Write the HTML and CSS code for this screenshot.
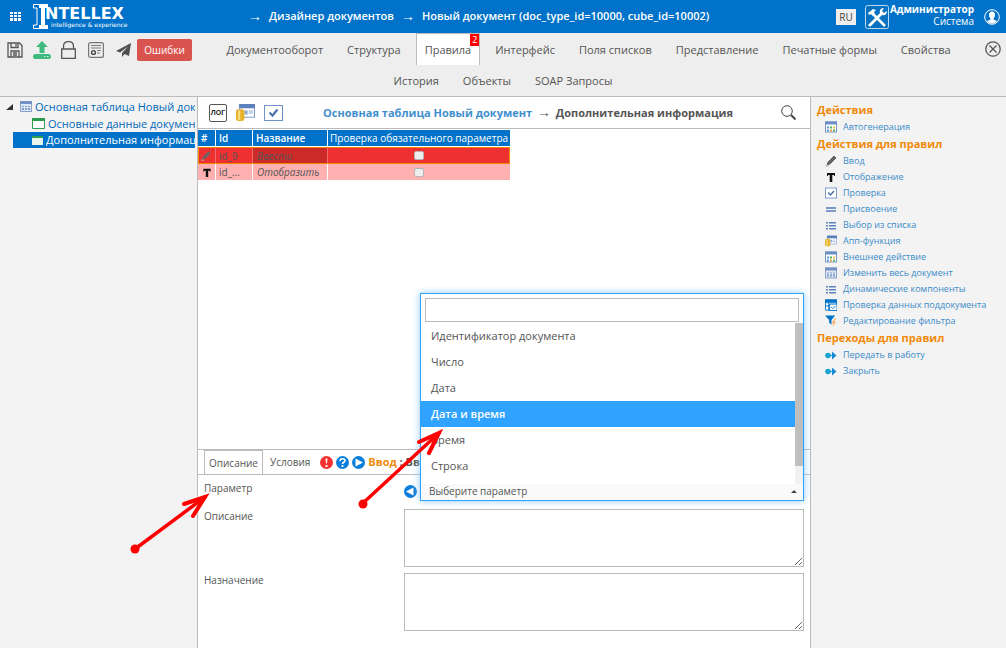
FILE: index.html
```html
<!DOCTYPE html>
<html lang="ru">
<head>
<meta charset="utf-8">
<title>Intellex — Дизайнер документов</title>
<link rel="stylesheet" href="styles.css">
</head>
<body>
<svg class="sprite" aria-hidden="true">
  <symbol id="i-calendar" viewBox="0 0 12 11"><rect x=".5" y=".5" width="11" height="10" fill="#fff" stroke="#7b97c9"/><path d="M0 0h12v3H0z" fill="#6d8fc7"/><path d="M2 5h2v2H2zM2 8h2v2H2z" fill="#5b9be0"/><path d="M5 5h2v2H5z" fill="#4fb35c"/><path d="M5 8h2v2H5z" fill="#e8a13c"/><path d="M8 5h2v2H8z" fill="#f0b84a"/><path d="M8 8h2v2H8z" fill="#4fb35c"/></symbol>
  <symbol id="i-grid" viewBox="0 0 12 11"><rect x=".5" y=".5" width="11" height="10" fill="#dfe7f4" stroke="#8aa1c9"/><path d="M0 0h12v3H0z" fill="#7391c4"/><path d="M2 5h2v1H2zM5 5h2v1H5zM8 5h2v1H8zM2 7h2v2H2zM5 7h2v2H5zM8 7h2v2H8z" fill="#7d9bce"/></symbol>
  <symbol id="i-pencil" viewBox="0 0 12 12"><path d="M9 1l2 2-6 6-3 1 1-3z" fill="#666" stroke="#666"/><path d="M0 11h4" stroke="#bbb"/></symbol>
  <symbol id="i-t" viewBox="0 0 12 12"><path d="M2 2h8v3H9V4H7.300v7H4.700V4H3v1H2z" fill="#111"/></symbol>
  <symbol id="i-check" viewBox="0 0 12 11"><rect x=".5" y=".5" width="11" height="10" fill="#fff" stroke="#7f9ccb"/><path d="M3 5l2.500 2.500L9 3.500" fill="none" stroke="#4f73ad" stroke-width="1.500"/></symbol>
  <symbol id="i-equal" viewBox="0 0 12 12"><path d="M1 4h10v2H1zM1 7h10v2H1z" fill="#7b98ca"/></symbol>
  <symbol id="i-list" viewBox="0 0 12 12"><path d="M1 3h2v1.500H1zM1 6h2v1.500H1zM1 9h2v1.500H1zM4 3h7v1.500H4zM4 6h7v1.500H4zM4 9h7v1.500H4z" fill="#5f83c0"/></symbol>
  <symbol id="i-app" viewBox="0 0 18 16"><path d="M3.500.5h14v12h-14z" fill="#fff" stroke="#7f9ccb"/><path d="M3 0h15v4H3z" fill="#5b80bd"/><path d="M8 6h3v4H8zM12 6h4v1h-4zM12 8h4v1h-4z" fill="#8ba8d8"/><rect x="0" y="5" width="8" height="11" rx="2" fill="#e8b22e"/><path d="M2 6h2v9H2z" fill="#f8df83"/></symbol>
  <symbol id="i-doccheck" viewBox="0 0 13 12"><path d="M.5.5h12v11H.5zM0 3.500h13M4 3v9M0 7h8" fill="#fff" stroke="#0072c9"/><path d="M0 0h13v3H0z" fill="#0072c9"/><path d="M5 5h8v7H5z" fill="#fff" stroke="#0072c9"/><path d="M6.500 8l2 2 3-3" fill="none" stroke="#0072c9"/></symbol>
  <symbol id="i-filter" viewBox="0 0 13 12"><path d="M0 0h11L7 5v5L4.500 8V5z" fill="#0072c9"/><path d="M11 3L7 8h2l-1 4 4-5h-2l2-4z" fill="#ffad69"/></symbol>
  <symbol id="i-move" viewBox="0 0 12 12"><circle cx="3" cy="6.500" r="2.800" fill="#19a4d4"/><path d="M6 6h1V2.500l4.500 4-4.500 4V7H6z" fill="#1788cf"/></symbol>
</svg>

<header class="top">
  <button class="apps" aria-label="Меню"><svg width="11" height="9" viewBox="0 0 11 9"><path d="M0 0h3v2H0zM4 0h3v2H4zM8 0h3v2H8zM0 3h3v2H0zM4 3h3v2H4zM8 3h3v2H8zM0 6h3v3H0zM4 6h3v3H4zM8 6h3v3H8z" fill="#fff"/></svg></button>
  <div class="logo">
    <svg width="16" height="25" viewBox="0 0 16 25"><path d="M7 .5H.5v3.500H4v17H.5v3.500H7" fill="none" stroke="#fff"/><path d="M6 0h9v4h-3v17h3v4H6v-4h2V4H6z" fill="#fff"/></svg>
    <div class="logo-words"><strong>NTELLEX</strong><small>intelligence &amp; experience</small></div>
  </div>
  <nav class="crumbs" aria-label="Путь"><span class="arrow">→</span><a href="#">Дизайнер документов</a><span class="arrow">→</span><a href="#">Новый документ (doc_type_id=10000, cube_id=10002)</a></nav>
  <div class="account">
    <button class="lang">RU</button>
    <button class="service" aria-label="Сервис"><svg width="24" height="24" viewBox="0 0 24 24"><rect x=".5" y=".5" width="23" height="23" rx="2" fill="#0871c0" stroke="#b9daf2"/><path d="M7 8l13 13" stroke="#fff" stroke-width="2.500"/><path d="M17 8L4 21" stroke="#fff" stroke-width="2.800"/><path d="M3 8l5-4 3 1-2 2 1 2-2 2-2-2-2 1z" fill="#fff"/><path d="M15 8c-1-4 2-5 4-5l-2 3 2 2 3-2c0 3-2 5-5 4z" fill="#fff"/></svg></button>
    <div class="who"><b>Администратор</b><span>Система</span></div>
    <svg class="avatar" width="16" height="16" viewBox="0 0 16 16"><circle cx="8" cy="8" r="7.300" fill="none" stroke="#fff"/><path d="M8 2.500c2 0 3 1.500 3 3.500S10 9 9.500 9.500v1l3.500 1.500C11.500 14 10 14.500 8 14.500S4 14 3 12l3.500-1.500v-1C6 9 5 8 5 6s1-3.500 3-3.500z" fill="#fff"/></svg>
  </div>
</header>

<div class="toolbar">
  <div class="toolbar-row">
    <div class="tools">
      <button aria-label="Сохранить"><svg width="16" height="16" viewBox="0 0 16 16" fill="none" stroke="#555" stroke-width="1.300"><path d="M1 1h11.500L15 3.500V15H1zM4 1v4.500h7V1M4 15V9h8v6M9 2v2.500M6 11h4M6 13h4"/></svg></button>
      <button aria-label="Выгрузить"><svg width="18" height="18" viewBox="0 0 18 18" fill="#3fba7e"><path d="M9 0l6 6h-3.500v6h-5V6H3z"/><path d="M2 13h14q2 0 2 2.500T16 18H2q-2 0-2-2.500T2 13z"/><path d="M11 15h1.500v1H11zM14 15h1.500v1H14z" fill="#d6f5e5"/></svg></button>
      <button aria-label="Заблокировать"><svg width="15" height="18" viewBox="0 0 15 18" fill="none" stroke="#555" stroke-width="1.300"><path d="M.7 8h13.600v9.300H.7zM2.500 8V5.500C2.500 2.500 4.500.7 7.500.7s5 1.800 5 4.800V8"/></svg></button>
      <button aria-label="Свидетельство"><svg width="16" height="16" viewBox="0 0 16 16" fill="none" stroke="#777"><rect x=".6" y=".6" width="14.800" height="14.800" rx="2" stroke-width="1.200"/><path d="M3 3.500h10M3 6h10M9 8.500h4M9 11h3"/><circle cx="5.500" cy="10.500" r="1.900" stroke="#444" stroke-width="1.400"/></svg></button>
      <button aria-label="Отправить"><svg width="15" height="14" viewBox="0 0 15 14"><path d="M15 0L0 8l4 1.500L12 3.500 6 10v4l2.500-3L13 13z" fill="#505050"/></svg></button>
      <button class="errors">Ошибки</button>
    </div>
    <nav class="tabs" aria-label="Разделы">
      <a href="#">Документооборот</a><a href="#">Структура</a><a href="#" class="active" aria-current="page">Правила<span class="badge">2</span></a><a href="#">Интерфейс</a><a href="#">Поля списков</a><a href="#">Представление</a><a href="#">Печатные формы</a><a href="#">Свойства</a>
    </nav>
    <button class="close" aria-label="Закрыть"><svg width="16" height="16" viewBox="0 0 16 16" fill="none" stroke="#555" stroke-width="1.300"><circle cx="8" cy="8" r="7.200"/><path d="M4.500 4.500l7 7M11.500 4.500l-7 7"/></svg></button>
  </div>
  <nav class="tabs second" aria-label="Дополнительно"><a href="#">История</a><a href="#">Объекты</a><a href="#">SOAP Запросы</a></nav>
</div>

<div class="body">
  <aside class="tree">
    <ul>
      <li class="root"><svg width="7" height="6" viewBox="0 0 7 6"><path d="M7 0v6H0z" fill="#333"/></svg><svg width="12" height="11"><use href="#i-grid"/></svg><a href="#">Основная таблица Новый док</a></li>
      <li><svg width="13" height="11" viewBox="0 0 13 11"><path d="M.5.5h12v10H.5z" fill="#fff" stroke="#2c9d50"/><path d="M0 0h13v3H0z" fill="#2c9d50"/></svg><a href="#">Основные данные докумен</a></li>
      <li class="selected"><svg width="11" height="9" viewBox="0 0 11 9"><path d="M0 0h11v9H0z" fill="#e8f5ec"/><path d="M0 0h11v2H0z" fill="#2c9d50"/></svg><a href="#">Дополнительная информац</a></li>
    </ul>
  </aside>

  <main class="center">
    <div class="titlebar">
      <div class="title-tools">
        <button class="log">ЛОГ</button>
        <button aria-label="Апп-функция"><svg width="19" height="17"><use href="#i-app"/></svg></button>
        <button aria-label="Проверка"><svg width="19" height="16" viewBox="0 0 19 16"><rect x=".5" y=".5" width="18" height="15" fill="#fff" stroke="#6f92ca"/><path d="M5.500 7.500l3 3 5-6" fill="none" stroke="#4b73b5" stroke-width="2.200"/></svg></button>
      </div>
      <h1><a href="#">Основная таблица Новый документ</a> <span class="arrow">→</span> Дополнительная информация</h1>
      <button class="search" aria-label="Поиск"><svg width="15" height="15" viewBox="0 0 15 15" fill="none" stroke="#444"><circle cx="6" cy="6" r="5.300"/><path d="M10 10l4.500 4.500" stroke-width="2"/></svg></button>
    </div>
    <div class="rules">
      <table>
        <thead><tr><th class="c-icon">#</th><th class="c-id">Id</th><th class="c-name">Название</th><th class="c-check">Проверка обязательного параметра</th></tr></thead>
        <tbody>
          <tr class="current"><td><svg width="10" height="10"><use href="#i-pencil"/></svg></td><td>id_9</td><td class="name">Ввести</td><td class="mid"><input type="checkbox" aria-label="Проверка для Ввести"></td></tr>
          <tr><td><svg width="12" height="11"><use href="#i-t"/></svg></td><td>id_...</td><td class="name">Отобразить</td><td class="mid"><input type="checkbox" aria-label="Проверка для Отобразить"></td></tr>
        </tbody>
      </table>
    </div>
    <section class="details">
      <div class="detail-tabs">
        <button class="on">Описание</button><button>Условия</button>
        <div class="marks">
          <svg width="13" height="13" viewBox="0 0 13 13"><circle cx="6.500" cy="6.500" r="6.500" fill="#f5302f"/><path d="M5.500 2.500h2l-.5 5H6zM5.500 9h2v2h-2z" fill="#fff"/></svg>
          <svg width="13" height="13" viewBox="0 0 13 13"><circle cx="6.500" cy="6.500" r="6.500" fill="#0b7ddb"/><path d="M4 5c0-3 5-3 5-.5C9 6.500 6.500 6 6.500 8M6.500 9v2" fill="none" stroke="#fff" stroke-width="1.600"/></svg>
          <svg width="13" height="13" viewBox="0 0 13 13"><circle cx="6.500" cy="6.500" r="6.500" fill="#0b7ddb"/><path d="M3.500 2.500l7.500 4-7.500 4z" fill="#fff"/></svg>
        </div>
        <strong class="rule-name"><span>Ввод</span> : Вв</strong>
      </div>
      <form class="fields">
        <label for="param">Параметр</label>
        <div class="param">
          <button type="button" class="back" aria-label="Назад"><svg width="13" height="13" viewBox="0 0 13 13"><circle cx="6.500" cy="6.500" r="6.500" fill="#0b7ddb"/><path d="M9.500 2.500L2 6.500l7.500 4z" fill="#fff"/></svg></button>
          <div class="combo">
            <div class="combo-box">
              <input type="text" class="combo-search" aria-label="Поиск параметра">
              <ul class="options" role="listbox" aria-label="Параметр" tabindex="0">
                <li role="option">Идентификатор документа</li><li role="option">Число</li><li role="option">Дата</li><li role="option" class="hover" aria-selected="true">Дата и время</li><li role="option">Время</li><li role="option">Строка</li>
              </ul>
              <button type="button" id="param" class="combo-value" aria-expanded="true">Выберите параметр<svg width="6" height="3" viewBox="0 0 6 3"><path d="M3 0l3 3H0z" fill="#444"/></svg></button>
            </div>
          </div>
        </div>
        <label for="descr">Описание</label>
        <textarea id="descr"></textarea>
        <label for="purpose">Назначение</label>
        <textarea id="purpose"></textarea>
      </form>
    </section>
  </main>

  <aside class="actions">
    <h2>Действия</h2>
    <ul><li><svg><use href="#i-calendar"/></svg><a href="#">Автогенерация</a></li></ul>
    <h2>Действия для правил</h2>
    <ul>
      <li><svg><use href="#i-pencil"/></svg><a href="#">Ввод</a></li>
      <li><svg><use href="#i-t"/></svg><a href="#">Отображение</a></li>
      <li><svg><use href="#i-check"/></svg><a href="#">Проверка</a></li>
      <li><svg><use href="#i-equal"/></svg><a href="#">Присвоение</a></li>
      <li><svg><use href="#i-list"/></svg><a href="#">Выбор из списка</a></li>
      <li><svg><use href="#i-app"/></svg><a href="#">Апп-функция</a></li>
      <li><svg><use href="#i-calendar"/></svg><a href="#">Внешнее действие</a></li>
      <li><svg><use href="#i-grid"/></svg><a href="#">Изменить весь документ</a></li>
      <li><svg><use href="#i-list"/></svg><a href="#">Динамические компоненты</a></li>
      <li><svg><use href="#i-doccheck"/></svg><a href="#">Проверка данных поддокумента</a></li>
      <li><svg><use href="#i-filter"/></svg><a href="#">Редактирование фильтра</a></li>
    </ul>
    <h2>Переходы для правил</h2>
    <ul>
      <li><svg><use href="#i-move"/></svg><a href="#">Передать в работу</a></li>
      <li><svg><use href="#i-move"/></svg><a href="#">Закрыть</a></li>
    </ul>
  </aside>
</div>

<svg class="pointers" width="330" height="140" viewBox="120 420 330 140" aria-hidden="true">
  <g stroke="#f00" stroke-linecap="round" fill="none"><path d="M135 549L205 497M362 504L439 433" stroke-width="3.500"/><path d="M184 504L205 497L193 516M419 442L439 433L429 453" stroke-width="4"/></g>
  <circle cx="135" cy="549" r="4.500" fill="#f00"/><circle cx="363" cy="504" r="4.500" fill="#f00"/>
</svg>
</body>
</html>
```
FILE: styles.css
```css
* { box-sizing: border-box; }
body { margin: 0; min-height: 100vh; display: flex; flex-direction: column; position: relative; background: #fff; color: #555; font: 11px/16px "Open Sans", "Noto Sans", sans-serif; overflow-x: hidden; }
button { padding: 0; border: 0; background: none; font: inherit; color: inherit; cursor: pointer; }
a { color: inherit; text-decoration: none; }
ul { margin: 0; padding: 0; list-style: none; }
svg { display: block; flex: none; }
.sprite { position: absolute; width: 0; height: 0; }
.arrow { font: 14px/16px "Open Sans", "Noto Sans", sans-serif; }

.top { height: 33px; display: flex; align-items: center; padding: 0 6px 0 10px; background: #0072c9; color: #fff; }
.apps { margin-right: 12px; }
.logo { display: flex; align-items: center; width: 92px; margin-right: 123px; }
.logo-words { display: flex; flex-direction: column; margin-left: -4px; }
.logo-words strong { font: bold 16px/15px "DejaVu Sans", sans-serif; }
.logo-words small { margin-left: 6px; font: 6px/7px "DejaVu Sans", sans-serif; white-space: nowrap; }
.crumbs { display: flex; align-items: center; gap: 7px; flex: 1; padding-bottom: 2px; font-weight: 600; white-space: nowrap; }
.account { display: flex; align-items: center; }
.lang { width: 20px; height: 16px; margin-right: 9px; background: #eee; color: #444; font-size: 10px; line-height: 14px; }
.who { display: flex; flex-direction: column; width: 85px; padding-bottom: 3px; text-align: right; font-size: 10px; line-height: 12px; }
.avatar { margin-left: 10px; }

.toolbar { background: #eee; border-bottom: 1px solid #bbb; }
.toolbar-row { display: flex; align-items: flex-start; padding: 0 5px 0 7px; }
.tools { display: flex; align-items: center; gap: 10px; height: 33px; }
.tools button:nth-child(4) { margin-left: 2px; }
.tools button:nth-child(5) { margin-left: 2px; }
.errors { width: 55px; height: 22px; margin-left: -4px; border-radius: 2px; background: #d9534f; color: #fff; font-size: 10px; }
.tabs { display: flex; justify-content: center; gap: 6px; flex: 1; white-space: nowrap; }
.tabs a { position: relative; height: 32px; padding: 8px; border: 1px solid transparent; border-bottom: 0; }
.tabs .active { background: #fff; border-color: #bbb; }
.badge { position: absolute; top: 0; right: 0; width: 9px; height: 12px; background: #f00; color: #fff; font-size: 9px; line-height: 11px; text-align: center; }
.second a { height: 30px; padding-top: 6px; }
.close { padding: 8px 0; }

.body { flex: 1; display: grid; grid-template-columns: 197px minmax(0, 1fr) 195px; }
.tree { background: #f3f3f3; padding: 1px 2px 0 6px; color: #0068b8; overflow: hidden; }
.tree li { display: flex; align-items: center; gap: 3px; height: 17px; margin-left: 7px; padding: 0 0 0 19px; white-space: nowrap; }
.tree li a { overflow: hidden; }
.tree .root { margin-left: 0; padding-left: 0; }
.tree .root svg:first-child { margin-right: 4px; }
.tree .selected { height: 16px; background: #0072c9; color: #fff; }

.center { display: flex; flex-direction: column; border: solid #bbb; border-width: 0 1px; background: #fff; }
.titlebar { display: flex; align-items: center; height: 32px; padding: 0 14px 0 11px; border-bottom: 1px solid #bbb; }
.title-tools { display: flex; align-items: center; gap: 9px; }
.log { width: 18px; height: 18px; border: 1px solid #555; border-radius: 2px; background: #fff; color: #222; font: bold 7px/14px "Liberation Sans", sans-serif; }
.titlebar h1 { flex: 1; margin: 0; padding-right: 8px; text-align: center; font-size: 11px; line-height: 16px; }
.titlebar h1 a { color: #3f8fce; }
.titlebar .arrow { margin: 0 2px; }
.rules { flex: 1; padding-top: 1px; }
table { width: 312px; border-spacing: 0; table-layout: fixed; font-size: 10px; line-height: 14px; }
th, td { height: 17px; padding: 0 3px; border: solid #fff; border-width: 0 1px 1px 0; text-align: left; white-space: nowrap; }
th { padding-bottom: 1px; background: #0072c9; color: #fff; font-weight: 600; }
td { background: #ffb0b0; }
th:last-child, td:last-child { border-right: 0; }
.c-icon { width: 18px; }
.c-id { width: 37px; }
.c-name { width: 75px; }
.c-check { padding: 0 0 1px 2px; font-weight: 500; }
.name { font-style: italic; padding-left: 4px; }
.mid { text-align: center; }
.current td { background: #ee3030; border-color: #f08800; border-width: 1px 0; box-shadow: inset -1px 0 #f26a6a; }
.current td:first-child { border-left-width: 1px; padding-left: 2px; }
.current td:last-child { border-right: 1px solid #f08800; box-shadow: none; }
.current .name { background: #cc2929; }
input[type="checkbox"] { appearance: none; display: block; width: 10px; height: 9px; margin: 0 auto; border: 1px solid #b5b5b5; border-radius: 2px; background: #eee; }

.details { border-top: 1px solid #bbb; }
.detail-tabs { display: flex; align-items: center; height: 25px; padding-left: 6px; border-bottom: 1px solid #bbb; font-size: 10px; }
.detail-tabs button { height: 24px; padding: 0 7px; }
.detail-tabs .on { padding: 0 4px; border: 1px solid #bbb; border-bottom: 0; }
.marks { display: flex; gap: 3px; margin: 0 3px; }
.rule-name { font-size: 11px; }
.rule-name span { color: #f18a0a; }
.fields { display: grid; grid-template-columns: 200px minmax(0, 1fr); gap: 6px 0; padding: 0 6px 17px; font-size: 10px; }
.fields label { padding-top: 5px; line-height: 16px; }
.fields > label:not(:first-child) { padding-top: 0; line-height: 14px; }
.param { display: flex; align-items: flex-end; height: 28px; }
.back { padding-bottom: 5px; }
.combo { position: relative; flex: 1; height: 28px; margin-left: 3px; }
.combo-box { position: absolute; left: 0; right: 0; bottom: 2px; padding: 4px 0 0; background: #fff; border: 1px solid #2fa3ff; box-shadow: 0 0 7px #8ec8f5; }
.combo-search { display: block; width: calc(100% - 8px); height: 24px; margin: 0 4px 1px; border: 1px solid #bbb; outline: 0; font: inherit; }
.options { height: 161px; padding-right: 8px; background: linear-gradient(#bfbfbf, #bfbfbf) right top / 8px 143px no-repeat, linear-gradient(#f1f1f1, #f1f1f1) right top / 8px 100% no-repeat; font-size: 11px; line-height: 26px; overflow: hidden; }
.options li { padding-left: 10px; }
.options .hover { background: #30a2ff; color: #fff; font-weight: 600; }
.combo-value { display: flex; align-items: center; justify-content: space-between; width: 100%; height: 16px; padding: 0 6px 2px 8px; background: #fafafa; }
textarea { display: block; width: 100%; height: 58px; border: 1px solid #bbb; background: #fff; font: inherit; resize: vertical; }

.actions { padding: 4px 6px; background: #f3f3f3; }
.actions h2 { margin: 0; font-size: 11px; line-height: 18px; color: #f18a0a; }
.actions li { display: flex; align-items: center; gap: 6px; height: 16px; padding-left: 8px; color: #3a8bc9; font-size: 9px; white-space: nowrap; }
.actions li svg { width: 12px; height: 12px; }
.pointers { position: absolute; left: 120px; top: 420px; pointer-events: none; }
```
